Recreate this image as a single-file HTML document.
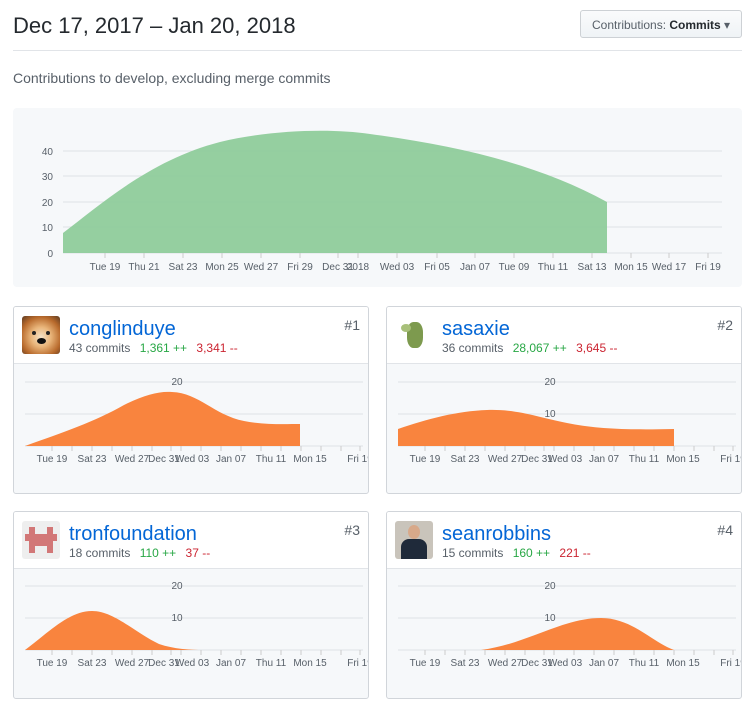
<!DOCTYPE html>
<html><head><meta charset="utf-8"><style>
*{box-sizing:border-box;margin:0;padding:0}
body{width:755px;height:709px;background:#fff;font-family:"Liberation Sans",Arial,sans-serif;position:relative;overflow:hidden;color:#24292e}
.abs{position:absolute}
h1{position:absolute;left:13px;top:13px;font-size:22px;font-weight:400;color:#24292e}
.btn{position:absolute;left:580px;top:10px;width:162px;height:28px;border:1px solid #cdd1d5;border-radius:3px;background:linear-gradient(#fafbfc,#eff3f6);font-size:12px;color:#586069;padding:7px 0 0 11px}
.btn b{color:#24292e;font-weight:600}
.hr{position:absolute;left:13px;top:50px;width:729px;height:1px;background:#e1e4e8}
.sub{position:absolute;left:13px;top:70px;font-size:14px;color:#586069}
.main{position:absolute;left:13px;top:108px;width:729px;height:179px;background:#f6f8fa;border-radius:4px}
.card{position:absolute;width:356px;height:188px;border:1px solid #d1d5da;border-radius:3px;background:#f6f8fa;overflow:hidden}
.hd{position:absolute;left:0;top:0;width:100%;height:57px;background:#fff;border-bottom:1px solid #e1e4e8}
.av{position:absolute;left:8px;top:9px;width:38px;height:38px;border-radius:3px;overflow:hidden}
.nm{position:absolute;left:55px;top:11px;font-size:20px;color:#0366d6}
.st{position:absolute;left:55px;top:34px;font-size:12px;color:#586069;white-space:nowrap}
.st .a{color:#28a745;margin-left:6px}.st .d{color:#cb2431;margin-left:6px}
.rk{position:absolute;right:8px;top:10px;font-size:14px;color:#586069}
svg text{font-family:"Liberation Sans",Arial,sans-serif;font-size:10px;fill:#586069}
</style></head><body>
<h1>Dec 17, 2017 – Jan 20, 2018</h1>
<div class="btn">Contributions: <b>Commits</b> ▾</div>
<div class="hr"></div>
<div class="sub">Contributions to develop, excluding merge commits</div>
<div class="main">
<svg width="729" height="179" viewBox="13 108 729 179" style="position:absolute;left:0;top:0">
<g stroke="#dfe2e5" stroke-width="1"><line x1="63" y1="151" x2="722" y2="151"/><line x1="63" y1="176" x2="722" y2="176"/><line x1="63" y1="202" x2="722" y2="202"/><line x1="63" y1="227" x2="722" y2="227"/><line x1="63" y1="253" x2="722" y2="253"/></g>
<path d="M63,233 C100,205 150,160 220,142 C270,130 330,128 370,134 C460,146 540,165 607,202 L607,253 L63,253 Z" fill="#8fcc9b" opacity="0.95"/>
<g stroke="#ccc"><line x1="105" y1="253" x2="105" y2="258"/><line x1="144" y1="253" x2="144" y2="258"/><line x1="183" y1="253" x2="183" y2="258"/><line x1="222" y1="253" x2="222" y2="258"/><line x1="261" y1="253" x2="261" y2="258"/><line x1="300" y1="253" x2="300" y2="258"/><line x1="338" y1="253" x2="338" y2="258"/><line x1="358" y1="253" x2="358" y2="258"/><line x1="397" y1="253" x2="397" y2="258"/><line x1="437" y1="253" x2="437" y2="258"/><line x1="475" y1="253" x2="475" y2="258"/><line x1="514" y1="253" x2="514" y2="258"/><line x1="553" y1="253" x2="553" y2="258"/><line x1="592" y1="253" x2="592" y2="258"/><line x1="631" y1="253" x2="631" y2="258"/><line x1="669" y1="253" x2="669" y2="258"/><line x1="708" y1="253" x2="708" y2="258"/></g>
<g text-anchor="end"><text x="53" y="155">40</text><text x="53" y="180">30</text><text x="53" y="206">20</text><text x="53" y="231">10</text><text x="53" y="257">0</text></g>
<g text-anchor="middle"><text x="105" y="270">Tue 19</text><text x="144" y="270">Thu 21</text><text x="183" y="270">Sat 23</text><text x="222" y="270">Mon 25</text><text x="261" y="270">Wed 27</text><text x="300" y="270">Fri 29</text><text x="338" y="270">Dec 31</text><text x="358" y="270">2018</text><text x="397" y="270">Wed 03</text><text x="437" y="270">Fri 05</text><text x="475" y="270">Jan 07</text><text x="514" y="270">Tue 09</text><text x="553" y="270">Thu 11</text><text x="592" y="270">Sat 13</text><text x="631" y="270">Mon 15</text><text x="669" y="270">Wed 17</text><text x="708" y="270">Fri 19</text></g>
</svg></div>

<div class="card" style="left:13px;top:306px">
<div class="hd"><div class="av" style="background:radial-gradient(circle at 50% 55%,#f3e2c8 0,#e9b57a 35%,#b86a2c 70%,#5b3a22 100%)"><div class="abs" style="left:15px;top:22px;width:9px;height:6px;border-radius:50%;background:#111"></div><div class="abs" style="left:10px;top:15px;width:4px;height:4px;border-radius:50%;background:#222"></div><div class="abs" style="left:24px;top:15px;width:4px;height:4px;border-radius:50%;background:#222"></div></div>
<div class="nm">conglinduye</div><div class="st">43 commits <span class="a">1,361 ++</span> <span class="d">3,341 --</span></div><div class="rk">#1</div></div>
<svg class="abs" style="left:0;top:0" width="356" height="188">
<g stroke="#dfe2e5"><line x1="11" y1="75" x2="349" y2="75"/><line x1="11" y1="107" x2="349" y2="107"/><line x1="11" y1="139" x2="349" y2="139"/></g>
<path d="M11,139 C50,125 80,115 110,98 C130,88 145,84 158,85 C185,86 200,108 230,114 C250,118 270,117 286,117 L286,139 Z" fill="#f9843e"/>
<text x="163" y="78" text-anchor="middle">20</text>
<g stroke="#ccc"><line x1="38" y1="139" x2="38" y2="144"/><line x1="58" y1="139" x2="58" y2="144"/><line x1="78" y1="139" x2="78" y2="144"/><line x1="98" y1="139" x2="98" y2="144"/><line x1="118" y1="139" x2="118" y2="144"/><line x1="138" y1="139" x2="138" y2="144"/><line x1="157" y1="139" x2="157" y2="144"/><line x1="167" y1="139" x2="167" y2="144"/><line x1="187" y1="139" x2="187" y2="144"/><line x1="207" y1="139" x2="207" y2="144"/><line x1="227" y1="139" x2="227" y2="144"/><line x1="247" y1="139" x2="247" y2="144"/><line x1="267" y1="139" x2="267" y2="144"/><line x1="287" y1="139" x2="287" y2="144"/><line x1="307" y1="139" x2="307" y2="144"/><line x1="327" y1="139" x2="327" y2="144"/><line x1="346" y1="139" x2="346" y2="144"/></g>
<g text-anchor="middle"><text x="38" y="155">Tue 19</text><text x="78" y="155">Sat 23</text><text x="118" y="155">Wed 27</text><text x="150" y="155">Dec 31</text><text x="178" y="155">Wed 03</text><text x="217" y="155">Jan 07</text><text x="257" y="155">Thu 11</text><text x="296" y="155">Mon 15</text><text x="346" y="155">Fri 19</text></g>
</svg></div>

<div class="card" style="left:386px;top:306px">
<div class="hd"><div class="av" style="background:#fff"><div class="abs" style="left:12px;top:6px;width:16px;height:26px;border-radius:40%;background:#7d9a4e"></div><div class="abs" style="left:6px;top:8px;width:10px;height:8px;border-radius:50%;background:#a8c07a"></div></div>
<div class="nm">sasaxie</div><div class="st">36 commits <span class="a">28,067 ++</span> <span class="d">3,645 --</span></div><div class="rk">#2</div></div>
<svg class="abs" style="left:0;top:0" width="356" height="188">
<g stroke="#dfe2e5"><line x1="11" y1="75" x2="349" y2="75"/><line x1="11" y1="107" x2="349" y2="107"/><line x1="11" y1="139" x2="349" y2="139"/></g>
<path d="M11,122 C40,112 70,104 100,103 C130,102 150,110 180,116 C210,122 240,123 287,122 L287,139 L11,139 Z" fill="#f9843e"/>
<text x="163" y="78" text-anchor="middle">20</text><text x="163" y="110" text-anchor="middle">10</text>
<g stroke="#ccc"><line x1="38" y1="139" x2="38" y2="144"/><line x1="58" y1="139" x2="58" y2="144"/><line x1="78" y1="139" x2="78" y2="144"/><line x1="98" y1="139" x2="98" y2="144"/><line x1="118" y1="139" x2="118" y2="144"/><line x1="138" y1="139" x2="138" y2="144"/><line x1="157" y1="139" x2="157" y2="144"/><line x1="167" y1="139" x2="167" y2="144"/><line x1="187" y1="139" x2="187" y2="144"/><line x1="207" y1="139" x2="207" y2="144"/><line x1="227" y1="139" x2="227" y2="144"/><line x1="247" y1="139" x2="247" y2="144"/><line x1="267" y1="139" x2="267" y2="144"/><line x1="287" y1="139" x2="287" y2="144"/><line x1="307" y1="139" x2="307" y2="144"/><line x1="327" y1="139" x2="327" y2="144"/><line x1="346" y1="139" x2="346" y2="144"/></g>
<g text-anchor="middle"><text x="38" y="155">Tue 19</text><text x="78" y="155">Sat 23</text><text x="118" y="155">Wed 27</text><text x="150" y="155">Dec 31</text><text x="178" y="155">Wed 03</text><text x="217" y="155">Jan 07</text><text x="257" y="155">Thu 11</text><text x="296" y="155">Mon 15</text><text x="346" y="155">Fri 19</text></g>
</svg></div>

<div class="card" style="left:13px;top:511px">
<div class="hd"><div class="av" style="background:#eee"><div class="abs" style="left:7px;top:6px;width:6px;height:26px;background:#d27777"></div><div class="abs" style="left:25px;top:6px;width:6px;height:26px;background:#d27777"></div><div class="abs" style="left:3px;top:13px;width:32px;height:7px;background:#d27777"></div><div class="abs" style="left:13px;top:13px;width:12px;height:12px;background:#d27777"></div></div>
<div class="nm">tronfoundation</div><div class="st">18 commits <span class="a">110 ++</span> <span class="d">37 --</span></div><div class="rk">#3</div></div>
<svg class="abs" style="left:0;top:0" width="356" height="188">
<g stroke="#dfe2e5"><line x1="11" y1="74" x2="349" y2="74"/><line x1="11" y1="106" x2="349" y2="106"/><line x1="11" y1="138" x2="349" y2="138"/></g>
<path d="M11,138 C35,120 55,99 78,99 C100,99 120,120 145,132 C160,137 175,138 190,138 Z" fill="#f9843e"/>
<text x="163" y="77" text-anchor="middle">20</text><text x="163" y="109" text-anchor="middle">10</text>
<g stroke="#ccc"><line x1="38" y1="138" x2="38" y2="143"/><line x1="58" y1="138" x2="58" y2="143"/><line x1="78" y1="138" x2="78" y2="143"/><line x1="98" y1="138" x2="98" y2="143"/><line x1="118" y1="138" x2="118" y2="143"/><line x1="138" y1="138" x2="138" y2="143"/><line x1="157" y1="138" x2="157" y2="143"/><line x1="167" y1="138" x2="167" y2="143"/><line x1="187" y1="138" x2="187" y2="143"/><line x1="207" y1="138" x2="207" y2="143"/><line x1="227" y1="138" x2="227" y2="143"/><line x1="247" y1="138" x2="247" y2="143"/><line x1="267" y1="138" x2="267" y2="143"/><line x1="287" y1="138" x2="287" y2="143"/><line x1="307" y1="138" x2="307" y2="143"/><line x1="327" y1="138" x2="327" y2="143"/><line x1="346" y1="138" x2="346" y2="143"/></g>
<g text-anchor="middle"><text x="38" y="154">Tue 19</text><text x="78" y="154">Sat 23</text><text x="118" y="154">Wed 27</text><text x="150" y="154">Dec 31</text><text x="178" y="154">Wed 03</text><text x="217" y="154">Jan 07</text><text x="257" y="154">Thu 11</text><text x="296" y="154">Mon 15</text><text x="346" y="154">Fri 19</text></g>
</svg></div>

<div class="card" style="left:386px;top:511px">
<div class="hd"><div class="av" style="background:#c9c4bb"><div class="abs" style="left:13px;top:4px;width:12px;height:14px;border-radius:50%;background:#d8a98a"></div><div class="abs" style="left:6px;top:18px;width:26px;height:20px;border-radius:8px 8px 0 0;background:#1f2a3a"></div></div>
<div class="nm">seanrobbins</div><div class="st">15 commits <span class="a">160 ++</span> <span class="d">221 --</span></div><div class="rk">#4</div></div>
<svg class="abs" style="left:0;top:0" width="356" height="188">
<g stroke="#dfe2e5"><line x1="11" y1="74" x2="349" y2="74"/><line x1="11" y1="106" x2="349" y2="106"/><line x1="11" y1="138" x2="349" y2="138"/></g>
<path d="M94,138 C140,132 175,106 214,106 C245,106 265,130 287,138 Z" fill="#f9843e"/>
<text x="163" y="77" text-anchor="middle">20</text><text x="163" y="109" text-anchor="middle">10</text>
<g stroke="#ccc"><line x1="38" y1="138" x2="38" y2="143"/><line x1="58" y1="138" x2="58" y2="143"/><line x1="78" y1="138" x2="78" y2="143"/><line x1="98" y1="138" x2="98" y2="143"/><line x1="118" y1="138" x2="118" y2="143"/><line x1="138" y1="138" x2="138" y2="143"/><line x1="157" y1="138" x2="157" y2="143"/><line x1="167" y1="138" x2="167" y2="143"/><line x1="187" y1="138" x2="187" y2="143"/><line x1="207" y1="138" x2="207" y2="143"/><line x1="227" y1="138" x2="227" y2="143"/><line x1="247" y1="138" x2="247" y2="143"/><line x1="267" y1="138" x2="267" y2="143"/><line x1="287" y1="138" x2="287" y2="143"/><line x1="307" y1="138" x2="307" y2="143"/><line x1="327" y1="138" x2="327" y2="143"/><line x1="346" y1="138" x2="346" y2="143"/></g>
<g text-anchor="middle"><text x="38" y="154">Tue 19</text><text x="78" y="154">Sat 23</text><text x="118" y="154">Wed 27</text><text x="150" y="154">Dec 31</text><text x="178" y="154">Wed 03</text><text x="217" y="154">Jan 07</text><text x="257" y="154">Thu 11</text><text x="296" y="154">Mon 15</text><text x="346" y="154">Fri 19</text></g>
</svg></div>
</body></html>
